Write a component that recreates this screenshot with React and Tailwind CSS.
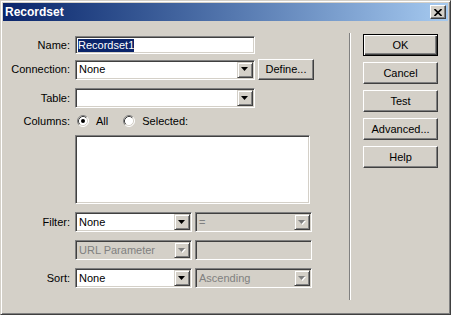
import React from 'react';

const font = { fontFamily: '"Liberation Sans", Arial, sans-serif' };

const sunken =
  'border border-t-[#808080] border-l-[#808080] border-b-white border-r-white shadow-[inset_1px_1px_0_#404040,inset_-1px_-1px_0_#d4d0c8]';
const raised =
  'border border-t-white border-l-white border-b-[#404040] border-r-[#404040] shadow-[inset_-1px_-1px_0_#808080]';

const Arrow = ({ disabled }) => (
  <div
    className={`w-[16px] h-[16px] flex items-center justify-center bg-[#d4d0c8] border border-t-[#d4d0c8] border-l-[#d4d0c8] border-b-[#404040] border-r-[#404040] shadow-[inset_1px_1px_0_#fff,inset_-1px_-1px_0_#808080]`}
  >
    <svg width="8" height="5" viewBox="0 0 8 5">
      {disabled && <polygon points="1,1 8,1 4.5,5" fill="#fff" />}
      <polygon points="0,0 7,0 3.5,4" fill={disabled ? '#808080' : '#000'} />
    </svg>
  </div>
);

const Combo = ({ width, value, disabled }) => (
  <div
    className={`${sunken} h-[20px] p-[1px] flex items-center ${disabled ? 'bg-[#d4d0c8] text-[#808080]' : 'bg-white text-black'}`}
    style={{ width }}
  >
    <span className="flex-1 pl-[2px] leading-none whitespace-nowrap overflow-hidden">{value}</span>
    <Arrow disabled={disabled} />
  </div>
);

const Radio = ({ checked }) => (
  <svg width="12" height="12" viewBox="0 0 12 12">
    <circle cx="6" cy="6" r="5" fill="#fff" />
    <path d="M2.11 9.89 A5.5 5.5 0 0 1 9.89 2.11" fill="none" stroke="#808080" />
    <path d="M9.89 2.11 A5.5 5.5 0 0 1 2.11 9.89" fill="none" stroke="#fff" />
    <path d="M2.82 9.18 A4.5 4.5 0 0 1 9.18 2.82" fill="none" stroke="#404040" />
    <path d="M9.18 2.82 A4.5 4.5 0 0 1 2.82 9.18" fill="none" stroke="#d4d0c8" />
    {checked && <circle cx="6" cy="6" r="2" fill="#000" />}
  </svg>
);

const Label = ({ children }) => (
  <div className="w-[67px] text-right whitespace-nowrap">{children}</div>
);

const Button = ({ children, isDefault }) => (
  <div
    className={`w-[75px] h-[22px] flex items-center justify-center bg-[#d4d0c8] ${
      isDefault
        ? 'border border-black shadow-[inset_1px_1px_0_#fff,inset_-1px_-1px_0_#404040,inset_-2px_-2px_0_#808080]'
        : raised
    }`}
  >
    {children}
  </div>
);

export default function App() {
  return (
    <div
      className="w-[451px] h-[315px] bg-[#d4d0c8] border border-t-[#d4d0c8] border-l-[#d4d0c8] border-r-[#404040] border-b-[#404040] shadow-[inset_1px_1px_0_#fff,inset_-1px_-1px_0_#808080] p-[2px] flex flex-col text-[11px] text-black select-none"
      style={font}
    >
      {/* title bar */}
      <div className="h-[18px] flex items-center bg-linear-to-r from-[#0a246a] to-[#a6caf0] pl-[2px] pr-[2px]">
        <span className="flex-1 text-white font-bold text-[12px] leading-none">Recordset</span>
        <div
          className={`w-[16px] h-[14px] flex items-center justify-center bg-[#d4d0c8] border border-t-white border-l-white border-b-[#404040] border-r-[#404040] shadow-[inset_-1px_-1px_0_#808080]`}
        >
          <svg width="8" height="7" viewBox="0 0 8 7">
            <path d="M0.5 0 L7.5 7 M7.5 0 L0.5 7" stroke="#000" strokeWidth="1.6" />
          </svg>
        </div>
      </div>

      {/* body */}
      <div className="flex-1 flex">
        <div className="w-[346px] pt-[15px] flex flex-col">
          <div className="flex items-center gap-[5px]">
            <Label>Name:</Label>
            <div className={`${sunken} w-[180px] h-[18px] bg-white flex items-center pl-[2px]`}>
              <span className="bg-[#0a246a] text-white leading-[13px]">Recordset1</span>
            </div>
          </div>

          <div className="flex items-center gap-[5px] mt-[5px]">
            <Label>Connection:</Label>
            <Combo width={180} value="None" />
            <div className="ml-[-2px] w-[56px] h-[21px]">
              <div className={`${raised} w-full h-full flex items-center justify-center bg-[#d4d0c8]`}>
                Define...
              </div>
            </div>
          </div>

          <div className="flex items-center gap-[5px] mt-[8px]">
            <Label>Table:</Label>
            <Combo width={180} value="" />
          </div>

          <div className="flex items-center gap-[5px] mt-[6px] h-[14px]">
            <Label>Columns:</Label>
            <div className="flex items-center pl-[2px]">
              <Radio checked />
              <span className="ml-[7px]">All</span>
              <div className="ml-[15px] flex items-center">
                <Radio />
              </div>
              <span className="ml-[7px]">Selected:</span>
            </div>
          </div>

          <div className="flex mt-[7px] pl-[72px]">
            <div className={`${sunken} w-[235px] h-[69px] bg-white`} />
          </div>

          <div className="flex items-center gap-[5px] mt-[8px]">
            <Label>Filter:</Label>
            <Combo width={117} value="None" />
            <div className="ml-[-2px]">
              <Combo width={117} value="=" disabled />
            </div>
          </div>

          <div className="flex items-center gap-[5px] mt-[8px]">
            <Label></Label>
            <Combo width={117} value="URL Parameter" disabled />
            <div className={`${sunken} ml-[-2px] w-[117px] h-[20px] bg-[#d4d0c8]`} />
          </div>

          <div className="flex items-center gap-[5px] mt-[8px]">
            <Label>Sort:</Label>
            <Combo width={117} value="None" />
            <div className="ml-[-2px]">
              <Combo width={117} value="Ascending" disabled />
            </div>
          </div>
        </div>

        {/* separator */}
        <div className="w-[2px] my-[12px] border-l border-l-[#808080] border-r border-r-white" />

        {/* buttons */}
        <div className="ml-[12px] pt-[13px] flex flex-col gap-[6px]">
          <Button isDefault>OK</Button>
          <Button>Cancel</Button>
          <Button>Test</Button>
          <Button>Advanced...</Button>
          <Button>Help</Button>
        </div>
      </div>
    </div>
  );
}
